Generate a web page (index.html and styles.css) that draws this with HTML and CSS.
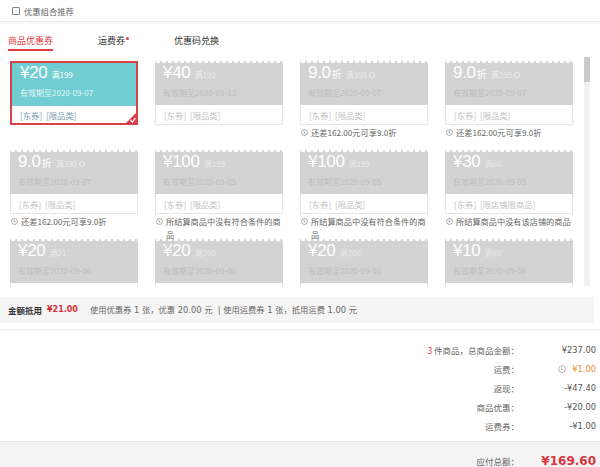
FILE: index.html
```html
<!DOCTYPE html>
<html lang="zh-CN">
<head>
<meta charset="utf-8">
<title>优惠券</title>
<link rel="stylesheet" href="styles.css">
</head>
<body>
<div class="page">
  <div class="top">
    <span class="cb"></span><span class="top-label">优惠组合推荐</span>
  </div>
  <div class="tabs">
    <span class="tab active">商品优惠券</span>
    <span class="tab">运费券<i class="dot"></i></span>
    <span class="tab">优惠码兑换</span>
  </div>

  <div class="scroll">
    <div class="grid">
      <!-- row 1 -->
      <div class="cell">
        <div class="coupon sel">
          <div class="c-head">
            <div class="c-amt"><span class="big">¥20</span><span class="quota">满199</span></div>
            <div class="c-date">有效期至2020-09-07</div>
          </div>
          <div class="c-foot">[东券]&nbsp;&nbsp;[限品类]</div>
          <svg class="check" width="12" height="12" viewBox="0 0 12 12"><polygon points="12,0 12,12 0,12" fill="#d8404a"/><polyline points="5.5,8.2 7.4,10 10.5,6.2" fill="none" stroke="#fff" stroke-width="1.2"/></svg>
        </div>
      </div>
      <div class="cell">
        <div class="coupon dis">
          <div class="c-head">
            <div class="c-amt"><span class="big">¥40</span><span class="quota">满199</span></div>
            <div class="c-date">有效期至2020-09-13</div>
          </div>
          <div class="c-foot">[东券]&nbsp;&nbsp;[限品类]</div>
        </div>
      </div>
      <div class="cell">
        <div class="coupon dis">
          <div class="c-head">
            <div class="c-amt"><span class="big">9.0</span><span class="zhe">折</span><span class="quota">满399</span><i class="qi"></i></div>
            <div class="c-date">有效期至2020-09-07</div>
          </div>
          <div class="c-foot">[东券]&nbsp;&nbsp;[限品类]</div>
        </div>
        <div class="note"><svg class="ni" width="7" height="7" viewBox="0 0 8 8"><circle cx="4" cy="4" r="3.4" fill="none" stroke="#888" stroke-width=".8"/><path d="M3.6 2v2.6h1.6" fill="none" stroke="#888" stroke-width=".8"/></svg><span>还差162.00元可享9.0折</span></div>
      </div>
      <div class="cell">
        <div class="coupon dis">
          <div class="c-head">
            <div class="c-amt"><span class="big">9.0</span><span class="zhe">折</span><span class="quota">满399</span><i class="qi"></i></div>
            <div class="c-date">有效期至2020-09-07</div>
          </div>
          <div class="c-foot">[东券]&nbsp;&nbsp;[限品类]</div>
        </div>
        <div class="note"><svg class="ni" width="7" height="7" viewBox="0 0 8 8"><circle cx="4" cy="4" r="3.4" fill="none" stroke="#888" stroke-width=".8"/><path d="M3.6 2v2.6h1.6" fill="none" stroke="#888" stroke-width=".8"/></svg><span>还差162.00元可享9.0折</span></div>
      </div>

      <!-- row 2 -->
      <div class="cell">
        <div class="coupon dis">
          <div class="c-head">
            <div class="c-amt"><span class="big">9.0</span><span class="zhe">折</span><span class="quota">满399</span><i class="qi"></i></div>
            <div class="c-date">有效期至2020-09-07</div>
          </div>
          <div class="c-foot">[东券]&nbsp;&nbsp;[限品类]</div>
        </div>
        <div class="note"><svg class="ni" width="7" height="7" viewBox="0 0 8 8"><circle cx="4" cy="4" r="3.4" fill="none" stroke="#888" stroke-width=".8"/><path d="M3.6 2v2.6h1.6" fill="none" stroke="#888" stroke-width=".8"/></svg><span>还差162.00元可享9.0折</span></div>
      </div>
      <div class="cell">
        <div class="coupon dis">
          <div class="c-head">
            <div class="c-amt"><span class="big">¥100</span><span class="quota">满199</span></div>
            <div class="c-date">有效期至2020-09-05</div>
          </div>
          <div class="c-foot">[东券]&nbsp;&nbsp;[限品类]</div>
        </div>
        <div class="note"><svg class="ni" width="7" height="7" viewBox="0 0 8 8"><circle cx="4" cy="4" r="3.4" fill="none" stroke="#888" stroke-width=".8"/><path d="M3.6 2v2.6h1.6" fill="none" stroke="#888" stroke-width=".8"/></svg><span>所结算商品中没有符合条件的商品</span></div>
      </div>
      <div class="cell">
        <div class="coupon dis">
          <div class="c-head">
            <div class="c-amt"><span class="big">¥100</span><span class="quota">满199</span></div>
            <div class="c-date">有效期至2020-09-05</div>
          </div>
          <div class="c-foot">[东券]&nbsp;&nbsp;[限品类]</div>
        </div>
        <div class="note"><svg class="ni" width="7" height="7" viewBox="0 0 8 8"><circle cx="4" cy="4" r="3.4" fill="none" stroke="#888" stroke-width=".8"/><path d="M3.6 2v2.6h1.6" fill="none" stroke="#888" stroke-width=".8"/></svg><span>所结算商品中没有符合条件的商品</span></div>
      </div>
      <div class="cell">
        <div class="coupon dis">
          <div class="c-head">
            <div class="c-amt"><span class="big">¥30</span><span class="quota">满66</span></div>
            <div class="c-date">有效期至2020-09-05</div>
          </div>
          <div class="c-foot">[东券]&nbsp;&nbsp;[限店铺限商品]</div>
        </div>
        <div class="note"><svg class="ni" width="7" height="7" viewBox="0 0 8 8"><circle cx="4" cy="4" r="3.4" fill="none" stroke="#888" stroke-width=".8"/><path d="M3.6 2v2.6h1.6" fill="none" stroke="#888" stroke-width=".8"/></svg><span>所结算商品中没有该店铺的商品</span></div>
      </div>

      <!-- row 3 (cut off by the scroll area) -->
      <div class="cell">
        <div class="coupon dis">
          <div class="c-head">
            <div class="c-amt"><span class="big">¥20</span><span class="quota">满21</span></div>
            <div class="c-date">有效期至2020-09-06</div>
          </div>
          <div class="c-foot"></div>
        </div>
      </div>
      <div class="cell">
        <div class="coupon dis">
          <div class="c-head">
            <div class="c-amt"><span class="big">¥20</span><span class="quota">满200</span></div>
            <div class="c-date">有效期至2020-09-06</div>
          </div>
          <div class="c-foot"></div>
        </div>
      </div>
      <div class="cell">
        <div class="coupon dis">
          <div class="c-head">
            <div class="c-amt"><span class="big">¥20</span><span class="quota">满200</span></div>
            <div class="c-date">有效期至2020-09-06</div>
          </div>
          <div class="c-foot"></div>
        </div>
      </div>
      <div class="cell">
        <div class="coupon dis">
          <div class="c-head">
            <div class="c-amt"><span class="big">¥10</span><span class="quota">满69</span></div>
            <div class="c-date">有效期至2020-09-06</div>
          </div>
          <div class="c-foot"></div>
        </div>
      </div>
    </div>
    <div class="sbar"><div class="thumb"></div></div>
  </div>

  <div class="usebar">
    <b class="ub-title">金额抵用</b><b class="ub-amt">¥21.00</b>
    <span class="ub-text">使用优惠券 1 张，优惠 20.00 元 &nbsp;|&nbsp;使用运费券 1 张，抵用运费 1.00 元</span>
  </div>

  <div class="summary">
    <div class="srow"><span class="sl"><em class="red">3</em> 件商品，总商品金额：</span><span class="sv">¥237.00</span></div>
    <div class="srow"><span class="sl">运费：</span><span class="sv orange"><svg class="fi" width="8" height="8" viewBox="0 0 8 8"><circle cx="4" cy="4" r="3.4" fill="none" stroke="#999" stroke-width=".7"/><path d="M3.6 2v2.6h1.6" fill="none" stroke="#999" stroke-width=".7"/></svg>¥1.00</span></div>
    <div class="srow"><span class="sl">返现：</span><span class="sv">-¥47.40</span></div>
    <div class="srow"><span class="sl">商品优惠：</span><span class="sv">-¥20.00</span></div>
    <div class="srow"><span class="sl">运费券：</span><span class="sv">-¥1.00</span></div>
  </div>

  <div class="total">
    <span class="sl">应付总额：</span><span class="tv">¥169.60</span>
  </div>
</div>
</body>
</html>
```

FILE: styles.css
```css
* { box-sizing: border-box; }
html, body { margin: 0; padding: 0; background: #fff; }
body {
  width: 600px;
  height: 467px;
  overflow: hidden;
  font-family: "Noto Sans CJK SC", "Liberation Sans", sans-serif;
  color: #333;
}
.page { width: 600px; }

.top {
  height: 22px;
  display: flex;
  align-items: center;
  padding-left: 12px;
  border-bottom: 1px solid #ececec;
  box-shadow: 0 1px 2px rgba(0,0,0,0.04);
}
.cb {
  width: 8px; height: 8px;
  border: 1px solid #888;
  border-radius: 1px;
  margin-right: 4px;
}
.top-label { font-size: 8.3px; color: #666; line-height: 12px; }

.tabs {
  display: flex;
  gap: 45px;
  padding: 13px 0 0 8px;
}
.tab {
  font-size: 9px;
  line-height: 12px;
  padding-bottom: 2px;
  color: #333;
  border-bottom: 2px solid transparent;
}
.tab.active { color: #e4393c; border-bottom-color: #e4393c; }
.dot {
  display: inline-block;
  width: 3px; height: 3px;
  border-radius: 50%;
  background: #e4393c;
  vertical-align: top;
  margin: 2px 0 0 1px;
}

.scroll {
  display: flex;
  height: 236px;
  overflow: hidden;
}
.grid {
  flex: none;
  display: grid;
  grid-template-columns: repeat(4, 128px);
  grid-auto-rows: 89px;
  column-gap: 17px;
  padding: 10px 0 0 10px;
}
.sbar {
  margin: 6px 10px 1px auto;
  width: 6px;
  background: #f1f1f1;
}
.thumb { height: 25px; background: #c9c9c9; border-radius: 1px; }

.coupon {
  position: relative;
  height: 64px;
  display: flex;
  flex-direction: column;
  font-family: "Liberation Sans", "Noto Sans CJK SC", sans-serif;
}
.c-head { position: relative; padding: 2px 0 0 8px; }
.c-amt { display: flex; align-items: baseline; height: 20px; line-height: 20px; }
.big { font-size: 17px; letter-spacing: -0.3px; color: #fff; }
.zhe { font-size: 10px; color: #fff; margin-left: 1px; }
.quota { font-size: 8px; margin-left: 4px; font-family: "Noto Sans CJK SC", sans-serif; }
.qi {
  display: inline-block;
  width: 6px; height: 6px;
  border: 1px solid #eee;
  border-radius: 50%;
  margin-left: 2px;
}
.c-date {
  font-size: 8px;
  line-height: 14px;
  margin-top: 3px;
  font-family: "Noto Sans CJK SC", sans-serif;
}
.c-foot {
  flex: 1;
  font-size: 8.3px;
  padding-left: 8px;
  background: #fff;
  font-family: "Noto Sans CJK SC", sans-serif;
  display: flex;
  align-items: center;
  padding-top: 1px;
}

.coupon.sel { border: 2px solid #d8404a; }
.coupon.sel .c-head { height: 43px; background: #70ced2; padding-top: 0; }
.coupon.sel .quota { color: #fff; }
.coupon.sel .c-date { color: rgba(255,255,255,0.85); }
.coupon.sel .c-foot { color: #7e9db0; }
.check { position: absolute; right: -1px; bottom: -1px; }

.coupon.dis .c-head { height: 44px; background: #d3d3d3; }
.coupon.dis .c-head::before {
  content: "";
  position: absolute;
  left: 0; right: 0; top: 0;
  height: 3px;
  background: radial-gradient(circle at 3px 0, #fff 2px, rgba(255,255,255,0) 2.6px) repeat-x;
  background-size: 6px 3px;
}
.coupon.dis .quota { color: #eaeaea; }
.coupon.dis .c-date { color: #bdbdbd; }
.coupon.dis .c-foot {
  color: #c3c3c3;
  border: 1px solid #e6e6e6;
  border-top: 0;
}

.note {
  display: flex;
  align-items: flex-start;
  font-size: 8.2px;
  line-height: 13px;
  color: #666;
  margin-top: 1px;
}
.ni { flex: none; margin: 3px 3px 0 1px; }

.usebar {
  margin-top: 10px;
  width: 594px;
  height: 26px;
  background: #f5f5f5;
  display: flex;
  align-items: center;
  padding-left: 8px;
  font-size: 8.5px;
  line-height: 12px;
}
.ub-title { color: #333; font-weight: bold; }
.ub-amt {
  color: #d9303a;
  font-family: "DejaVu Sans", sans-serif;
  font-size: 8px;
  margin-left: 5px;
}
.ub-text {
  color: #666;
  margin-left: 12px;
  font-size: 8.3px;
  font-family: "DejaVu Sans", "Noto Sans CJK SC", sans-serif;
}

.summary {
  margin-top: 6px;
  border-top: 2px solid #f2f2f2;
  padding-top: 9px;
  height: 112px;
}
.srow, .total {
  display: flex;
  justify-content: flex-end;
  align-items: center;
  padding-right: 4px;
}
.srow { height: 19px; }
.sl { font-size: 8.5px; color: #666; line-height: 12px; }
.sl em { font-style: normal; }
.red { color: #e4393c; }
.sv {
  width: 77px;
  text-align: right;
  font-family: "DejaVu Sans", sans-serif;
  font-size: 8.3px;
  color: #555;
  display: flex;
  justify-content: flex-end;
  align-items: center;
}
.orange { color: #ee8a2c; }
.fi { margin-right: 6px; }

.total {
  border-top: 1px solid #e9e9e9;
  background: #f3f3f3;
  height: 40px;
  padding-top: 10px;
  align-items: flex-start;
}
.total .sl { line-height: 18px; }
.tv {
  width: 77px;
  text-align: right;
  font-family: "DejaVu Sans", sans-serif;
  font-weight: bold;
  font-size: 12px;
  line-height: 18px;
  color: #d9353f;
}
```
